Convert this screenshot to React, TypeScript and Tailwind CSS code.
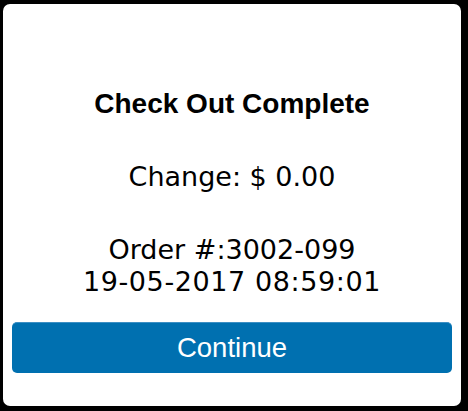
export default function App() {
  return (
    <div className="h-[411px] w-[468px] bg-black pl-[3px] pt-[4px]">
      <div className="flex h-[402px] w-[458px] flex-col items-center rounded-[7px] bg-white px-[9px] pt-[84px]">
        <h1 className="font-['Liberation_Sans',Arial,sans-serif] text-[28px] font-bold leading-[32px] text-black">
          Check Out Complete
        </h1>

        <div className="mt-[41px] font-['DejaVu_Sans',sans-serif] text-[27px] leading-[32px] text-black">
          Change: $ 0.00
        </div>

        <div className="mt-[41px] flex flex-col items-center font-['DejaVu_Sans',sans-serif] text-[27px] leading-[32px] text-black">
          <span>Order #:3002-099</span>
          <span className="tracking-[0.6px]">19-05-2017 08:59:01</span>
        </div>

        <button className="mt-[24px] flex h-[51px] w-full items-center justify-center rounded-[5px] border-t border-[#3c8fc4] bg-[#0070b0] font-['Liberation_Sans',Arial,sans-serif] text-[27.5px] leading-none text-white">
          Continue
        </button>
      </div>
    </div>
  );
}
